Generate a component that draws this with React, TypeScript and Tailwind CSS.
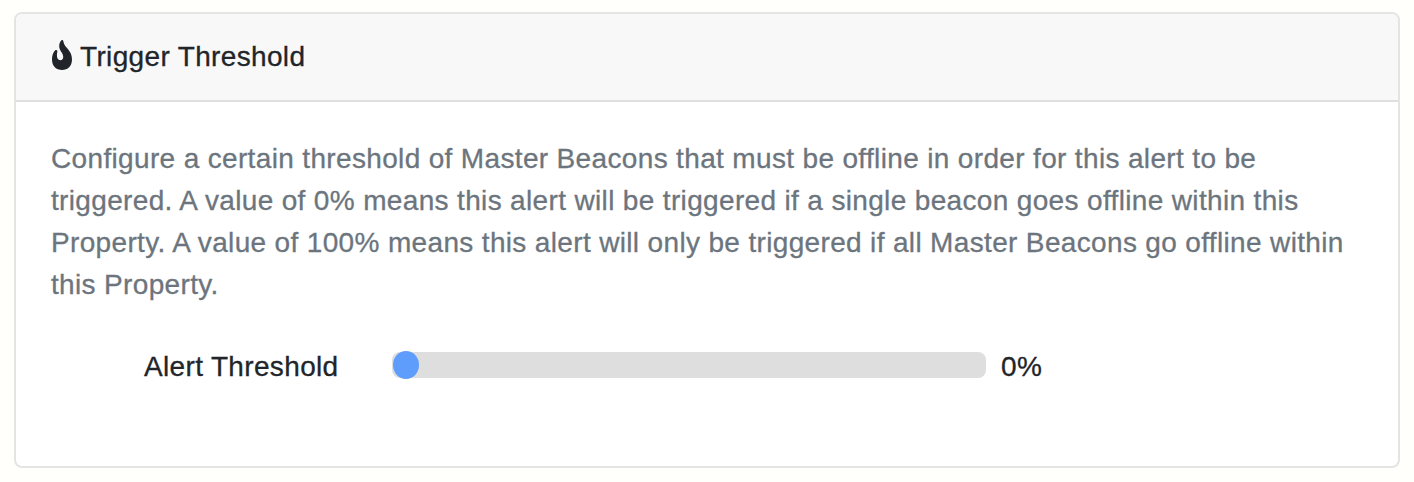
const lines = [
  'Configure a certain threshold of Master Beacons that must be offline in order for this alert to be',
  'triggered. A value of 0% means this alert will be triggered if a single beacon goes offline within this',
  'Property. A value of 100% means this alert will only be triggered if all Master Beacons go offline within',
  'this Property.',
];

function FlameIcon() {
  return (
    <svg viewBox="0 0 20 30" className="-mt-1 ml-px h-[30px] w-5 shrink-0 fill-current" aria-hidden="true">
      <path d="M10.4 0C11.3.2 11.4 1.3 11.7 2.8C12.8 7.8 20 10.2 20 19.5C20 26 15.8 30 10 30S0 26 0 19.5C0 15.6 1.2 12.2 3.5 10.1C4.9 9.5 5.6 10.3 5.3 11.8C4.9 13.4 4.8 15 5 16.6C5.2 18.8 6.4 20.2 8.2 20.2C10.2 20.2 11.4 18.7 11.2 16.4C10.8 12.3 7.1 10.6 7.2 6C7.2 3.7 8.2 1.5 9.5.3C9.8 0 10.1 0 10.4 0Z" />
    </svg>
  );
}

export default function App() {
  return (
    <div className="h-[482px] bg-[#fffffb] px-[14px] pt-3 font-['Liberation_Sans',Arial,sans-serif] text-[28px] leading-[42px] tracking-[0.345px] text-[#212529] [-webkit-text-stroke:0.3px_currentColor]">
      <section className="flex h-[456px] flex-col overflow-hidden rounded-lg border-2 border-[#e4e4e4] bg-white">
        <header className="flex h-[88px] shrink-0 items-center border-b-2 border-[#dfdfdf] bg-[#f8f8f8] pl-[35px]">
          <FlameIcon />
          <h2 className="ml-2 whitespace-nowrap">Trigger Threshold</h2>
        </header>
        <div className="pt-9 pl-[35px]">
          <p className="text-[#6c757d]">
            {lines.map((line) => (
              <span key={line} className="block whitespace-nowrap">{line}</span>
            ))}
          </p>
          <div className="mt-10 flex items-center">
            <label className="ml-[93px] w-[248px] whitespace-nowrap">Alert Threshold</label>
            <div className="mb-1 flex h-[26px] w-[594px] items-center rounded-lg bg-[#dedede]">
              <span className="ml-px h-7 w-[26px] shrink-0 rounded-[50%] bg-[#5f9dfc]" />
            </div>
            <span className="ml-[15px]">0%</span>
          </div>
        </div>
      </section>
    </div>
  );
}
